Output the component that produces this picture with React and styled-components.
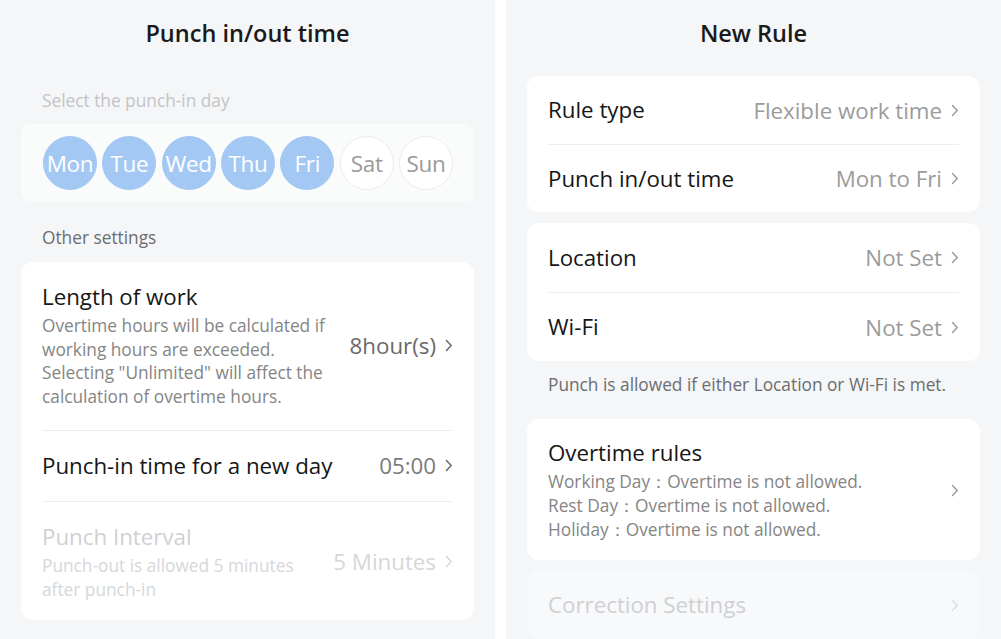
import React from "react";
import styled, { createGlobalStyle } from "styled-components";

const Global = createGlobalStyle`
  html, body { margin: 0; padding: 0; background: #ffffff; }
  body { font-family: "Open Sans", "Noto Sans", sans-serif; -webkit-font-smoothing: antialiased; }
  * { box-sizing: border-box; }
`;

const Page = styled.div`
  display: grid;
  grid-template-columns: 495px 495px;
  column-gap: 11px;
  width: 1001px;
  height: 639px;
  overflow: hidden;
`;

const Panel = styled.div`
  background: #f5f6f8;
  height: 639px;
  padding: 0 21px;
  display: flex;
  flex-direction: column;
  overflow: hidden;
`;

const Title = styled.h1`
  margin: 0;
  height: 68px;
  display: flex;
  align-items: center;
  justify-content: center;
  font-size: 23.5px;
  font-weight: 600;
  color: #1a1a1a;
  padding-bottom: 2px;
`;

const SectionLabel = styled.div`
  font-size: 17.3px;
  color: ${(p) => (p.$muted ? "#c2c4c7" : "#6b6d70")};
  padding: 0 21px;
  line-height: 22px;
  margin-top: ${(p) => p.$mt || 0}px;
`;

const Card = styled.div`
  background: ${(p) => (p.$disabled ? "#f8f9fa" : "#ffffff")};
  border-radius: 12px;
  padding: 0 21px;
  margin-top: ${(p) => p.$mt || 0}px;
  display: flex;
  flex-direction: column;
`;

const DayCard = styled.div`
  background: #fafbfb;
  border-radius: 10px;
  margin-top: 12px;
  padding: 12px 21px 12px 22px;
  display: flex;
  justify-content: space-between;
`;

const Day = styled.div`
  width: 54px;
  height: 54px;
  border-radius: 50%;
  display: flex;
  align-items: center;
  justify-content: center;
  font-size: 22.5px;
  letter-spacing: -0.3px;
  color: ${(p) => (p.$on ? "#ffffff" : "#9a9a9a")};
  background: ${(p) => (p.$on ? "#a3c8f4" : "#ffffff")};
  border: 1px solid ${(p) => (p.$on ? "#a3c8f4" : "#ececec")};
`;

const Row = styled.div`
  display: flex;
  align-items: center;
  gap: 12px;
  min-height: ${(p) => p.$h || 68}px;
  padding: ${(p) => p.$pad || "0"};
  border-top: ${(p) => (p.$divider ? "1px solid #eeeeee" : "none")};
`;

const RowMain = styled.div`
  flex: 1;
  min-width: 0;
  display: flex;
  flex-direction: column;
`;

const Label = styled.div`
  font-size: 22.3px;
  line-height: 30px;
  color: ${(p) => (p.$disabled ? "#cfd0d2" : "#161616")};
  white-space: nowrap;
  margin-bottom: ${(p) => (p.$withDesc ? 2 : 0)}px;
`;

const Desc = styled.div`
  font-size: 17.3px;
  line-height: ${(p) => p.$lh || 23.7}px;
  color: ${(p) => (p.$disabled ? "#d6d7d9" : "#858585")};
  max-width: ${(p) => p.$max || "none"};
`;

const Value = styled.div`
  display: flex;
  align-items: center;
  gap: 9px;
  font-size: 22.3px;
  color: ${(p) => p.$color || "#9b9b9b"};
  white-space: nowrap;
`;

const Note = styled.div`
  font-size: 17.3px;
  color: #6b6d70;
  padding: 13px 21px 23px;
  line-height: 22px;
`;

const Chevron = ({ color = "#6a6a6a" }) => (
  <svg width="8" height="13" viewBox="0 0 8 13" fill="none">
    <path d="M1.5 1.5 L6.2 6.5 L1.5 11.5" stroke={color} strokeWidth="1.5" strokeLinecap="round" strokeLinejoin="round" />
  </svg>
);

const days = [
  ["Mon", true],
  ["Tue", true],
  ["Wed", true],
  ["Thu", true],
  ["Fri", true],
  ["Sat", false],
  ["Sun", false],
];

export default function App() {
  return (
    <>
      <Global />
      <Page>
        <Panel>
          <Title>Punch in/out time</Title>
          <SectionLabel $muted $mt={22}>Select the punch-in day</SectionLabel>
          <DayCard>
            {days.map(([d, on]) => (
              <Day key={d} $on={on}>{d}</Day>
            ))}
          </DayCard>
          <SectionLabel $mt={25}>Other settings</SectionLabel>
          <Card $mt={13}>
            <Row $pad="20px 0 21px">
              <RowMain>
                <Label $withDesc>Length of work</Label>
                <Desc $max="295px">
                  Overtime hours will be calculated if working hours are exceeded. Selecting "Unlimited" will affect the calculation of overtime hours.
                </Desc>
              </RowMain>
              <Value $color="#6a6a6a">
                8hour(s) <Chevron />
              </Value>
            </Row>
            <Row $divider $h={71}>
              <RowMain>
                <Label>Punch-in time for a new day</Label>
              </RowMain>
              <Value $color="#7a7a7a">
                05:00 <Chevron />
              </Value>
            </Row>
            <Row $divider $pad="20px 0 19px">
              <RowMain>
                <Label $disabled $withDesc>Punch Interval</Label>
                <Desc $disabled $max="270px">Punch-out is allowed 5 minutes after punch-in</Desc>
              </RowMain>
              <Value $color="#d6d7d9">
                5 Minutes <Chevron color="#d6d7d9" />
              </Value>
            </Row>
          </Card>
        </Panel>

        <Panel>
          <Title>New Rule</Title>
          <Card $mt={9}>
            <Row>
              <RowMain><Label>Rule type</Label></RowMain>
              <Value>Flexible work time <Chevron color="#9b9b9b" /></Value>
            </Row>
            <Row $divider>
              <RowMain><Label>Punch in/out time</Label></RowMain>
              <Value>Mon to Fri <Chevron color="#9b9b9b" /></Value>
            </Row>
          </Card>
          <Card $mt={11}>
            <Row $h={69}>
              <RowMain><Label>Location</Label></RowMain>
              <Value>Not Set <Chevron color="#9b9b9b" /></Value>
            </Row>
            <Row $divider $h={69}>
              <RowMain><Label>Wi-Fi</Label></RowMain>
              <Value>Not Set <Chevron color="#9b9b9b" /></Value>
            </Row>
          </Card>
          <Note>Punch is allowed if either Location or Wi-Fi is met.</Note>
          <Card>
            <Row $pad="19px 0 18px">
              <RowMain>
                <Label $withDesc>Overtime rules</Label>
                <Desc $lh={24}>Working Day：Overtime is not allowed.</Desc>
                <Desc $lh={24}>Rest Day：Overtime is not allowed.</Desc>
                <Desc $lh={24}>Holiday：Overtime is not allowed.</Desc>
              </RowMain>
              <Value><Chevron color="#9b9b9b" /></Value>
            </Row>
          </Card>
          <Card $disabled $mt={11}>
            <Row>
              <RowMain><Label $disabled>Correction Settings</Label></RowMain>
              <Value><Chevron color="#dcdddf" /></Value>
            </Row>
          </Card>
        </Panel>
      </Page>
    </>
  );
}
